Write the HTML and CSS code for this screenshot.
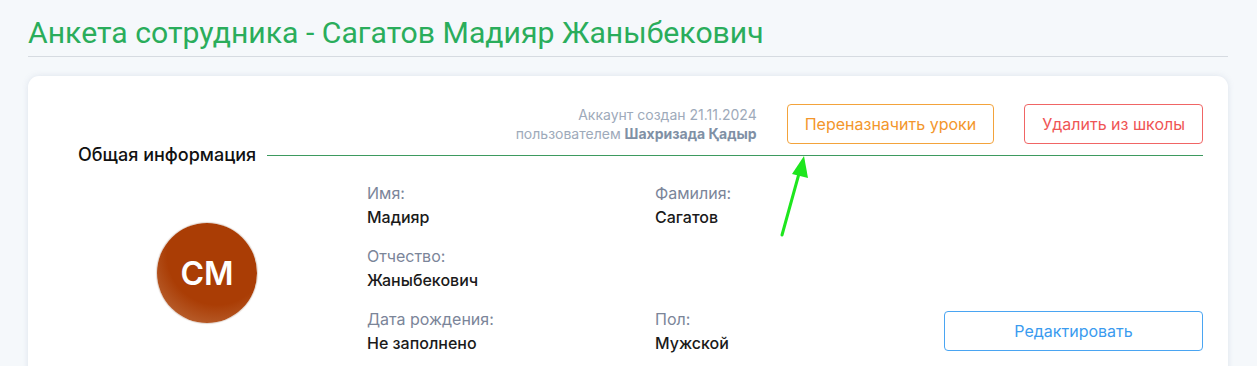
FILE: index.html
```html
<!DOCTYPE html>
<html lang="ru">
<head>
  <meta charset="UTF-8" />
  <title>Анкета сотрудника</title>
  <link rel="stylesheet" href="styles.css">
</head>
<body>
  <div class="page">
    <h1 class="page-title">Анкета сотрудника - Сагатов Мадияр Жаныбекович</h1>

    <div class="card">
      <div class="card-top">
        <div class="created">
          <div>Аккаунт создан 21.11.2024</div>
          <div>пользователем <b>Шахризада Қадыр</b></div>
        </div>
        <button class="btn btn-orange">Переназначить уроки</button>
        <button class="btn btn-red">Удалить из школы</button>
      </div>

      <div class="section-title">
        <span>Общая информация</span>
        <div class="section-line"></div>
      </div>

      <div class="profile">
        <div class="avatar-col">
          <div class="avatar">CM</div>
        </div>
        <div class="fields">
          <div class="field">
            <div class="field-label">Имя:</div>
            <div class="field-value">Мадияр</div>
          </div>
          <div class="field">
            <div class="field-label">Фамилия:</div>
            <div class="field-value">Сагатов</div>
          </div>
          <div></div>
          <div class="field">
            <div class="field-label">Отчество:</div>
            <div class="field-value">Жаныбекович</div>
          </div>
          <div></div>
          <div></div>
          <div class="field">
            <div class="field-label">Дата рождения:</div>
            <div class="field-value">Не заполнено</div>
          </div>
          <div class="field">
            <div class="field-label">Пол:</div>
            <div class="field-value">Мужской</div>
          </div>
          <div class="edit-cell">
            <button class="btn btn-blue">Редактировать</button>
          </div>
        </div>
      </div>
    </div>

    <!-- annotation arrow -->
    <svg class="arrow" width="40" height="90" viewBox="0 0 40 90">
      <line x1="10" y1="85" x2="28" y2="20" stroke="#1ee61e" stroke-width="3" stroke-linecap="round"/>
      <polygon points="32,6 36,28 20,24" fill="#1ee61e"/>
    </svg>
  </div>
</body>
</html>
```

FILE: styles.css
```css
body {
  margin: 0;
  background-color: #f5f8fb;
  font-family: Inter, "Noto Sans", sans-serif;
  color: #1e1e1e;
  height: 366px;
  overflow: hidden;
}

.page {
  position: relative;
  padding: 0 29px 0 28px;
}

.page-title {
  margin: 0;
  padding: 15px 0 6px;
  font-family: Roboto, sans-serif;
  font-size: 30.2px;
  font-weight: 400;
  color: #2aad5b;
  border-bottom: 1px solid #d6dbe1;
}

.card {
  margin-top: 19px;
  background: #fff;
  border-radius: 11px;
  box-shadow: 0 0 6px rgba(120, 140, 170, 0.18);
  padding: 28px 25px 40px 50px;
}

.card-top {
  display: flex;
  justify-content: flex-end;
  align-items: center;
  gap: 30px;
}

.created {
  text-align: right;
  font-size: 14px;
  line-height: 19px;
  color: #9eaaba;
}

.created b {
  color: #8090a5;
  font-weight: 700;
}

.btn {
  font-family: inherit;
  font-size: 16px;
  background: #fff;
  border-radius: 4px;
  height: 40px;
  padding: 0 17px;
  cursor: pointer;
}

.btn-orange {
  border: 1px solid #f3a33b;
  color: #f3962c;
}

.btn-red {
  border: 1px solid #f06565;
  color: #ef5555;
}

.btn-blue {
  border: 1px solid #4aa5f2;
  color: #3a9bef;
  width: 259px;
}

.section-title {
  display: flex;
  align-items: center;
  gap: 11px;
  font-size: 18px;
  line-height: 22px;
  font-weight: 500;
  color: #111;
}

.section-line {
  flex: 1;
  height: 1px;
  background: #3d9a5f;
}

.profile {
  display: flex;
  margin-top: 17px;
}

.avatar-col {
  width: 289px;
  display: flex;
  align-items: center;
  padding-right: 31px;
  box-sizing: border-box;
  justify-content: center;
}

.avatar {
  width: 100px;
  height: 100px;
  border-radius: 50%;
  background: radial-gradient(circle at 60% 32%, #aa3d05 55%, #b8602f 82%);
  box-shadow: 0 0 1px 1px #e0d6d0;
  color: #fff;
  font-size: 32px;
  font-weight: 600;
  display: flex;
  align-items: center;
  justify-content: center;
  margin-top: 10px;
}

.fields {
  flex: 1;
  display: grid;
  grid-template-columns: 288px 288px 1fr;
  row-gap: 19px;
}

.field-label {
  font-size: 16px;
  line-height: 20px;
  color: #7b8599;
}

.field-value {
  margin-top: 4px;
  font-size: 16px;
  line-height: 20px;
  font-weight: 500;
  color: #1a1a1a;
}

.edit-cell {
  display: flex;
  justify-content: flex-end;
  align-items: center;
}

.arrow {
  position: absolute;
  left: 772px;
  top: 150px;
}
```
